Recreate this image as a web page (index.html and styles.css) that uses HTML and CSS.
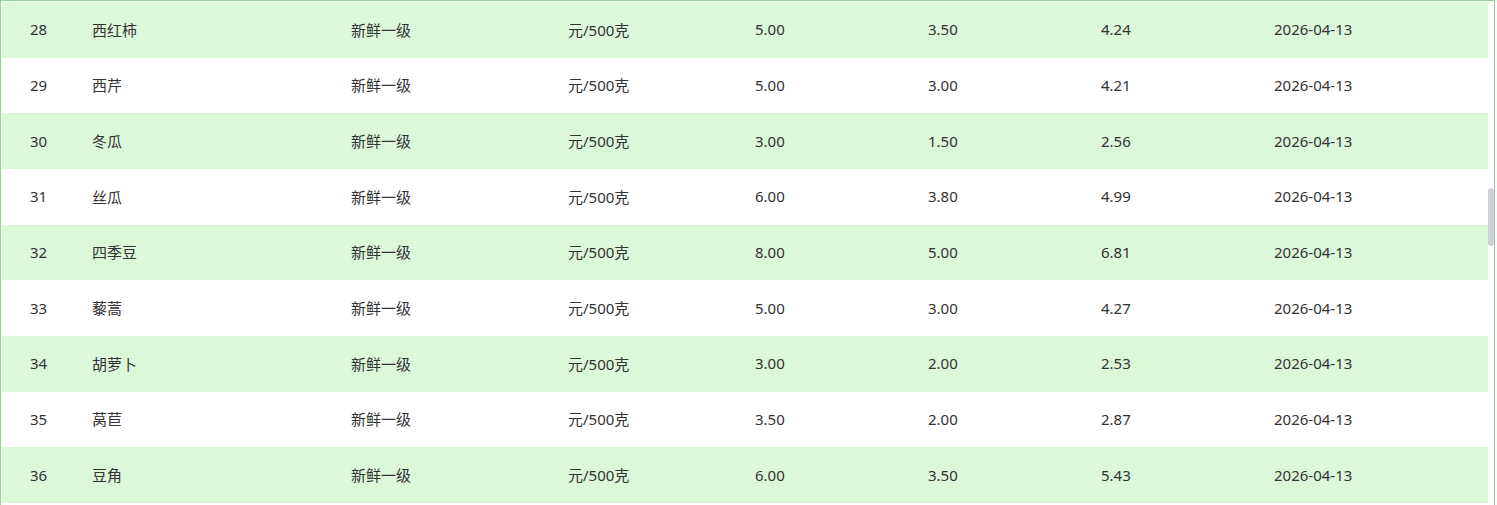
FILE: index.html
```html
<!DOCTYPE html>
<html lang="zh-CN">
<head>
<meta charset="utf-8">
<title>价格表</title>
<link rel="stylesheet" href="styles.css">
</head>
<body>
<div class="panel">
  <div class="rows">
    <div class="row alt"><span>28</span><span>西红柿</span><span>新鲜一级</span><span>元/500克</span><span>5.00</span><span>3.50</span><span>4.24</span><span>2026-04-13</span></div>
    <div class="row"><span>29</span><span>西芹</span><span>新鲜一级</span><span>元/500克</span><span>5.00</span><span>3.00</span><span>4.21</span><span>2026-04-13</span></div>
    <div class="row alt"><span>30</span><span>冬瓜</span><span>新鲜一级</span><span>元/500克</span><span>3.00</span><span>1.50</span><span>2.56</span><span>2026-04-13</span></div>
    <div class="row"><span>31</span><span>丝瓜</span><span>新鲜一级</span><span>元/500克</span><span>6.00</span><span>3.80</span><span>4.99</span><span>2026-04-13</span></div>
    <div class="row alt"><span>32</span><span>四季豆</span><span>新鲜一级</span><span>元/500克</span><span>8.00</span><span>5.00</span><span>6.81</span><span>2026-04-13</span></div>
    <div class="row"><span>33</span><span>藜蒿</span><span>新鲜一级</span><span>元/500克</span><span>5.00</span><span>3.00</span><span>4.27</span><span>2026-04-13</span></div>
    <div class="row alt"><span>34</span><span>胡萝卜</span><span>新鲜一级</span><span>元/500克</span><span>3.00</span><span>2.00</span><span>2.53</span><span>2026-04-13</span></div>
    <div class="row"><span>35</span><span>莴苣</span><span>新鲜一级</span><span>元/500克</span><span>3.50</span><span>2.00</span><span>2.87</span><span>2026-04-13</span></div>
    <div class="row alt"><span>36</span><span>豆角</span><span>新鲜一级</span><span>元/500克</span><span>6.00</span><span>3.50</span><span>5.43</span><span>2026-04-13</span></div>
  </div>
  <div class="track"><div class="thumb"></div></div>
</div>
</body>
</html>
```

FILE: styles.css
```css
html, body {
  margin: 0;
  padding: 0;
  background: #ffffff;
  overflow: hidden;
}

body {
  font-family: "Noto Sans", "Noto Sans CJK SC", sans-serif;
  font-size: 15px;
  color: #333333;
}

.panel {
  width: 1495px;
  height: 505px;
  box-sizing: border-box;
  border: 1px solid #8fd18f;
  border-bottom: none;
  padding: 1px 0 0 1px;
  display: flex;
}

.rows {
  width: 1486px;
  display: flex;
  flex-direction: column;
}

.row {
  height: 55.67px;
  box-sizing: border-box;
  padding-left: 28px;
  padding-bottom: 1px;
  display: grid;
  grid-template-columns: 62px 259px 217px 187px 173px 173px 173px 1fr;
  align-items: center;
  background: #ffffff;
  white-space: nowrap;
}

.row.alt {
  background: #dbf8d9;
}

.track {
  width: 6px;
  display: flex;
  flex-direction: column;
}

.thumb {
  margin-top: 186px;
  height: 58px;
  width: 6px;
  border-radius: 3px;
  background: #cdd1d8;
}
```
